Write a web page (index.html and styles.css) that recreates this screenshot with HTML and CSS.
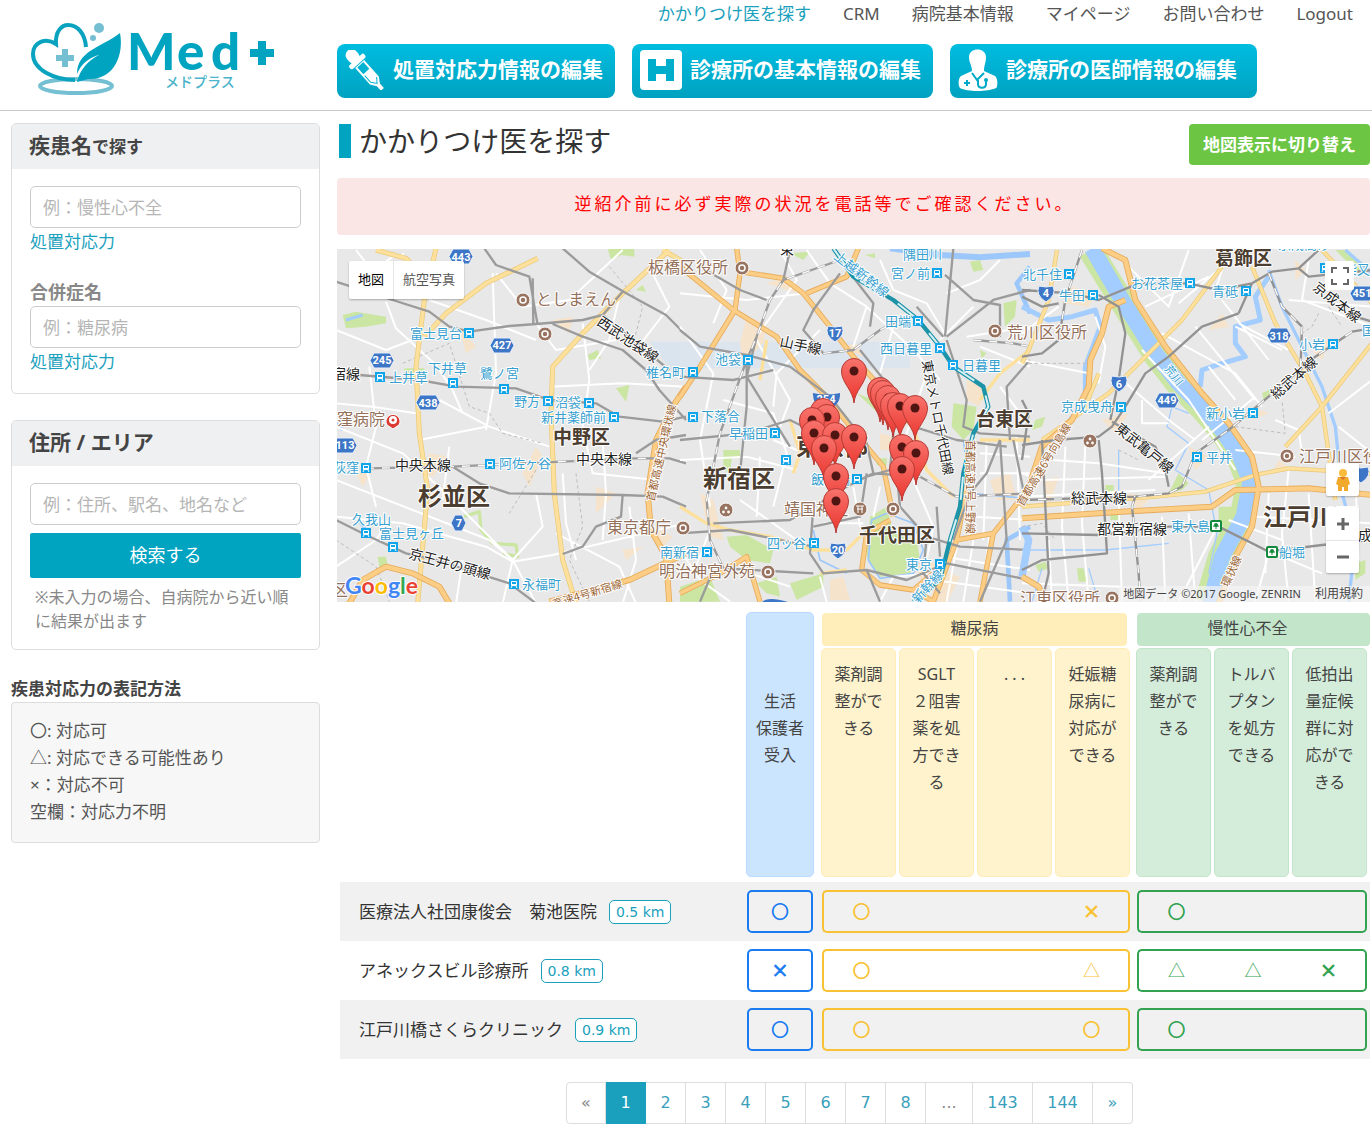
FILE: index.html
```html
<!DOCTYPE html>
<html lang="ja">
<head>
<meta charset="utf-8">
<meta name="viewport" content="width=device-width, initial-scale=1">
<title>Med+ かかりつけ医を探す</title>
<link rel="stylesheet" href="styles.css">
</head>
<body>
<header class="site-header">
  <a class="logo" href="#" aria-label="Med+ メドプラス">
    <svg width="250" height="76" viewBox="28 20 250 76" aria-hidden="true">
      <ellipse cx="76" cy="86" rx="36" ry="7" fill="none" stroke="#74bfd2" stroke-width="4"/>
      <path d="M75 80C55 80 33 70 33 54C33 42 46 37 56 44C55 31 62 25 68 25C78 25 85 34 86 47L60 76z" fill="#fff"/>
      <path d="M75 80C55 80 33 70 33 54C33 42 46 37 56 44C55 31 62 25 68 25C78 25 85 34 86 47" fill="none" stroke="#0aa3bf" stroke-width="4"/>
      <path d="M62 49h6v6h6v6h-6v6h-6v-6h-6v-6h6z" fill="#74bfd2"/>
      <circle cx="99" cy="28" r="5" fill="#74bfd2"/><circle cx="93" cy="38" r="3" fill="#74bfd2"/>
      <path d="M77 74C77 51 100 48 120 33C124 54 115 80 88 79L77 82C80 69 89 60 99 55C90 57 81 64 77 74z" fill="#00a4c1"/>
      <text x="127 177 211" y="70" class="logo-word">Med</text>
      <path d="M258 41h8v8h8v8h-8v8h-8v-8h-8v-8h8z" fill="#00a4c1"/>
      <text x="165" y="87" class="logo-kana">メドプラス</text>
    </svg>
  </a>
  <div class="header-main">
    <nav class="top-nav">
      <a class="current" href="#">かかりつけ医を探す</a>
      <a href="#">CRM</a>
      <a href="#">病院基本情報</a>
      <a href="#">マイページ</a>
      <a href="#">お問い合わせ</a>
      <a href="#">Logout</a>
    </nav>
    <nav class="edit-nav">
      <a href="#">
        <svg width="40" height="40" viewBox="0 0 40 40" aria-hidden="true"><g transform="rotate(-42 20 20)" fill="#fff"><rect x="14" y="-6" width="12" height="15" rx="6"/><rect x="10" y="6" width="20" height="5" rx="2"/><path d="M14 12h12v22l-4 6v6h-4v-6l-4-6z"/><path d="M16 13h8v9h-8z" fill="#00b3d3"/><path d="M16 24v9l4 5l4-5" fill="none" stroke="#00b3d3"/></g></svg>
        処置対応力情報の編集</a>
      <a href="#">
        <svg width="42" height="40" viewBox="0 0 42 40" aria-hidden="true"><rect width="42" height="40" rx="4" fill="#fff"/><path d="M8 9h8v7h10V9h8v22h-8v-7H16v7H8z" fill="#00aecb"/></svg>
        診療所の基本情報の編集</a>
      <a href="#">
        <svg width="40" height="42" viewBox="0 0 40 42" aria-hidden="true"><path d="M11 8C11-2 28-2 28 8C28 14 26 16 26 22L37 27C40 29 40 38 38 39C30 43 9 43 2 39C0 37 0 29 3 27L14 22C14 16 11 14 11 8z" fill="#fff"/><path d="M9 31v6M6 34h6M14 24l5 7l7-7M20 31v4c0 5 8 5 8 0v-3" fill="none" stroke="#00a9c7" stroke-width="2"/><circle cx="28" cy="31" r="2" fill="#00a9c7"/></svg>
        診療所の医師情報の編集</a>
    </nav>
  </div>
</header>

<div class="page">
  <aside class="sidebar">
    <form>
      <section class="card">
        <h2>疾患名<small>で探す</small></h2>
        <div class="card-body">
          <input type="text" aria-label="疾患名" placeholder="例：慢性心不全">
          <a class="ability" href="#">処置対応力</a>
          <label for="comp">合併症名</label>
          <input type="text" id="comp" placeholder="例：糖尿病">
          <a class="ability" href="#">処置対応力</a>
        </div>
      </section>
      <section class="card">
        <h2>住所 / エリア</h2>
        <div class="card-body">
          <input type="text" aria-label="住所 / エリア" placeholder="例：住所、駅名、地名など">
          <button class="search" type="submit">検索する</button>
          <p class="note">※未入力の場合、自病院から近い順に結果が出ます</p>
        </div>
      </section>
    </form>
    <h3>疾患対応力の表記方法</h3>
    <ul class="legend">
      <li>〇: 対応可</li>
      <li>△: 対応できる可能性あり</li>
      <li>×：対応不可</li>
      <li>空欄：対応力不明</li>
    </ul>
  </aside>

  <main>
    <div class="title-row">
      <h1>かかりつけ医を探す</h1>
      <button class="switch" type="button">地図表示に切り替え</button>
    </div>
    <p class="alert">逆紹介前に必ず実際の状況を電話等でご確認ください。</p>

    <div class="map">
      <svg class="map-art" viewBox="337 249 1033 353" preserveAspectRatio="xMidYMid slice" role="img" aria-label="地図">
        <defs>
          <symbol id="st" viewBox="0 0 10 10"><rect width="10" height="10" fill="#12a5ea"/><rect x="2" y="2" width="6" height="5" rx="1" fill="#fff"/><path d="M3 3h4v2H3z" fill="#12a5ea"/><path d="M2 9l1-2M8 9L7 7" stroke="#fff"/></symbol>
          <symbol id="gst" viewBox="0 0 12 12"><rect x="1" y="1" width="10" height="10" rx="1" fill="#fff" stroke="#12893b" stroke-width="2"/><circle cx="6" cy="5" r="2" fill="#12893b"/><path d="M3 6h6M6 5v4" stroke="#12893b"/></symbol>
          <symbol id="poi" viewBox="0 0 16 16"><circle cx="8" cy="8" r="7" fill="#98735f" stroke="#fff"/><circle cx="8" cy="8" r="3" fill="none" stroke="#fff" stroke-width="1.5"/></symbol>
          <symbol id="dots" viewBox="0 0 16 16"><circle cx="8" cy="8" r="7" fill="#98735f" stroke="#fff"/><g fill="#fff"><circle cx="8" cy="6" r="1.4"/><circle cx="5.5" cy="10" r="1.4"/><circle cx="10.500" cy="10" r="1.4"/></g></symbol>
          <symbol id="hex" viewBox="0 0 26 17"><path d="M5 1h16l4 7.500l-4 7.500H5L1 8.500z" fill="#3d76c6" stroke="#e8f0fb"/></symbol>
          <symbol id="shield" viewBox="0 0 20 18"><path d="M3 1Q10 3 17 1Q21 10 10 17Q-1 10 3 1z" fill="#3d76c6" stroke="#e8f0fb"/></symbol>
          <symbol id="pin" viewBox="0 0 28 48"><path d="M14 46C13 33 1.500 26 1.500 14a12.500 12.500 0 0 1 25 0C26.500 26 15 33 14 46z" fill="url(#pinfill)" stroke="#b63a33"/><circle cx="14" cy="14" r="4.500" fill="#4e1512"/></symbol>
          <linearGradient id="pinfill" x1="0" y1="0" x2="0" y2="1"><stop offset="0" stop-color="#f8736c"/><stop offset="1" stop-color="#ea352e"/></linearGradient>
        </defs>
        <rect x="337" y="249" width="1033" height="353" fill="#e8e8e8"/>

        <!-- western third -->
        <g transform="translate(336 240) scale(.33333)" fill="none" stroke-linejoin="round">
          <g fill="#cbe6a3"><path d="M20 225L60 215L150 230L150 250L90 260L30 265zM815 25h80v25l-40-5l-30 15zM755 345l30-15l10 25l-35 5zM840 445l40-10l-10 50zM205 385h60v30h-60zM125 950h25l5 25l-25 5zM900 150l20-15l10 20z"/></g>
          <path d="M30 240l50-15M0 550l20 20M60 830l30 40" stroke="#a3ccff" stroke-width="10"/>
          <path d="M385 830L430 815L435 870L470 910L540 915L545 950L500 940" stroke="#cbe6a3" stroke-width="10"/>
          <path d="M940 305h110v90h-40z" fill="#d9e4ee"/>
          <g fill="#f6e3cc"><path d="M280 640l60 10l-50 60l-20-10zM600 620l20 30l-40 90l-20-40zM60 700l50-10l-30 50zM780 740l60 20l-60 60zM860 930l60-10l-50 40zM370 260l50 60l-30 20zM650 240l60-10l-10 50zM960 860l50 30l-40 40z"/></g>
          <g stroke="#fff" stroke-width="6">
            <path d="M60 30L110 95L170 50M150 185L180 265L300 375L350 450L380 520M310 480L460 560L640 620M0 560L200 640L350 780L530 960L600 1090M530 960L620 860L600 760M530 960L460 900L0 720M450 570L480 400L470 100M600 250L660 330L840 300M640 440L860 430L1050 440M740 250L760 420L740 560L770 700L960 720M0 830L200 850L450 920L530 965L650 945L1050 850M100 380L120 560L90 680L120 800M250 600L450 560M0 490L110 500L240 520M0 270L150 330L230 300M280 180L450 240L600 300M480 100L560 200L700 180L860 30M680 700L690 850L720 960M800 600L810 760L800 900M880 800L900 960L860 1090M380 960L360 1090M200 40L240 160M530 960L500 1090M340 620L320 780M660 880L850 980L900 1090M850 170L820 300L760 390M950 100L1000 200L900 330M0 980L120 900L150 850"/>
          </g>
          <g stroke="#bdbdbd" stroke-width="3" stroke-dasharray="10 8"><path d="M200 370L340 310L400 500L460 520L500 580L620 610M720 700L740 860L700 960L760 1085M820 80L920 200L890 320M600 690L520 820M0 900L120 980L160 1085"/></g>
          <g stroke="#e9c878" stroke-width="15"><path id="wy" d="M300 25L265 180L240 380L250 580L275 750L245 1090M605 55L450 130L330 220L265 290M1000 30L860 160L740 280L650 380L645 520L655 760L680 960L720 1090M120 30L210 55L300 150M1050 70L980 30"/></g>
          <g stroke="#fde09b" stroke-width="11"><use href="#wy"/></g>
          <g stroke="#e6ab5b" stroke-width="18"><path id="wo" d="M40 1090L80 1020L150 980L230 1000L310 1040L340 1090M640 1085L880 1020L1050 940M1050 440L1010 500L960 600L935 760L945 870L990 950L1000 1090"/></g>
          <g stroke="#fbcd85" stroke-width="13"><use href="#wo"/></g>
          <g stroke="#9b9b9b" stroke-width="7"><path d="M0 125L170 180L280 215L340 260L400 275L520 258L600 252L740 240L800 225L860 155M445 25L480 75L580 110L604 250M590 115L592 250M680 25L760 95L880 165L990 225L1050 285M650 252L740 290L860 330L930 390L970 450L1050 540M70 405L250 420L360 440L540 445L640 480L780 490L850 530L980 545L1050 530M90 685L350 680L560 670L900 655L1000 655L1050 670M350 680L430 730L520 760L860 765L980 770L1050 800M860 765L855 830L780 860L740 920L680 942M0 840L90 885L210 940L300 960L520 1030L600 1090M900 640L960 600L1050 585M800 225L1000 390"/></g>
          <path d="M90 685L350 680L560 670L900 655L1000 655" stroke="#fff" stroke-width="4" stroke-dasharray="24 24"/>
        </g>

        <!-- centre third -->
        <g transform="translate(680 240) scale(.33333)" fill="none" stroke-linejoin="round">
          <path d="M0 305h690v80H0z" fill="#dce5ee"/>
          <g fill="#cbe6a3"><path d="M570 830L620 800L640 880L710 900L720 960L690 1000L600 1010L560 950zM140 890L200 885L280 930L270 970L200 960L150 920zM330 1030L430 1000L430 1040L350 1080zM0 1040L90 1010L120 1085L0 1085zM130 630h50v25h-25l-5 50l-20-20zM820 490L890 500L880 570L850 600L815 560zM530 460l50 20l15 40zM870 65l30-5l10 30l-30 5zM970 190l40-10l-5 50l-30 30zM590 655h30v20h-30zM230 1030l60-20l10 60l-40-10zM330 40l60-5l-20 25zM555 45l30-5v15zM900 330l20 10l-15 15z"/></g>
          <g fill="#f6e3cc"><path d="M200 230l60 20l-10 60l-60 60l-10-60zM60 760l40 20l30 120l-40-10zM860 420l50 20l-10 60l-40-20zM780 990l60 20l-40 80l-50-10zM260 130l60-20l30 50zM480 320l50-10l20 40zM600 580l40 10v40h-40zM690 960l90 10l-40 80zM450 1020l40-10l20 70h-60zM930 720l60-20l20 80h-60z"/></g>
          <g stroke="#9cc7fb"><path d="M630 25L780 45L900 52L1050 42" stroke-width="18"/><path d="M1050 80L1010 130L1050 220M990 1085L980 900L1050 860" stroke-width="14"/><path d="M565 960L600 1015L700 1000L730 930L700 850L620 820L575 840L565 960M850 600L870 760L1040 775M400 870L420 960L500 1000" stroke-width="5"/></g>
          <g stroke="#fff" stroke-width="6"><path d="M0 260L100 400L60 600L90 800M230 290L350 120L300 30M60 30L140 150L100 250M0 660L200 650L350 690M130 480L280 520L320 640L280 800M230 300L330 480L300 560M380 30L450 130L560 200L520 320M560 200L700 330L780 420M600 60L640 150L740 190L800 290M0 160L200 180L380 160M240 650L230 830M420 270L290 400L280 500M640 260L600 400M740 400L640 700M900 320L1050 380M960 440L1050 560M900 640L1050 650M900 700L1050 700M880 830L1050 840M920 600L910 900M1010 590L1020 900M700 720L760 860L740 960M520 740L540 860M600 740L580 830M180 780L350 900M150 980L330 1040M430 850L550 850M440 1085L420 1010M600 1085L640 1010L760 1000M830 920L800 1085M880 900L850 1085M930 880L900 1085M760 1020L1050 1060M790 950L1050 990M960 60L900 120L800 160M880 200L780 300M1050 260L860 290M0 930L60 1020L150 1085M280 600L420 660L480 640M90 870L40 1000"/></g>
          <g stroke="#e6ab5b" stroke-width="16"><path id="co" d="M170 25L180 100L165 210L60 380L0 470M0 80L160 210L290 290L360 390L430 460M180 95L310 115L370 160L450 260L520 350L600 440L700 560M535 25L500 110L380 160M430 460L560 620L610 680L640 830M0 1060L120 1000L200 950L240 1085M545 990L560 880L630 840M545 990L600 1035L700 1050L760 1000M870 600L850 800L830 900L760 1085M1050 740L980 830L940 880L900 1085M830 900L940 880M700 1050L760 1085"/></g>
          <g stroke="#fbcd85" stroke-width="11"><use href="#co"/></g>
          <g stroke="#fde09b" stroke-width="10"><path d="M700 560L740 690L820 770M1050 330L960 400L900 480M150 870L270 890L400 930L500 930L550 880M0 800L80 850L150 870M240 420L260 300M330 540L360 640L340 700M420 1000L500 990M900 600L1050 600"/></g>
          <g stroke="#9b9b9b" stroke-width="7"><path d="M480 60L310 120L270 180L230 290L200 360L120 580L80 780L90 900L130 985M200 360L200 500L180 700M330 30L310 120M0 270L60 320L200 345L330 380L450 470L560 610L580 700L500 740L400 800L330 840L100 850M820 25L795 290M800 290L940 180L1050 150M795 105L880 180L960 195L960 290M480 60L580 190L570 260M480 100L400 210L370 270L430 340L520 330L600 270L680 230M800 300L860 480L850 560L900 580L1050 590M0 600L200 580L330 540L450 600M580 700L720 710L830 770L1050 760M960 600L980 900L900 1085M400 800L390 940L430 1000L560 990L600 1085M130 985L400 1000M60 80L180 150L260 180M230 290L200 410L330 620M0 410L160 420L280 390M640 580L630 690L560 710M650 700L660 800L740 890L840 920L1050 930M400 920L150 870L0 880M740 890L730 1000L780 1060M540 330L620 430L640 580M1050 360L980 440L990 600M880 300L1000 310L1050 320M710 200L790 290M700 560L830 600L980 620M560 700L540 830L400 860M560 990L680 1020L800 970L1050 1020M1000 600L1040 800M100 990L60 1085M770 800L780 950M960 600L920 700L870 760L820 900"/></g>
          <path d="M480 60L310 120L270 180L230 290L200 360L120 580L80 780L90 900L130 985M430 340L520 330L600 270L680 230M880 300L1000 310L1050 320M650 700L720 710L830 770L1050 760" stroke="#fff" stroke-width="4" stroke-dasharray="24 24"/>
          <path d="M460 25L520 110L640 180L715 240L780 320L820 380L910 440L925 500L880 580L850 700L840 800L810 900L780 1020L700 1085" stroke="#1d93a8" stroke-width="13"/>
          <path d="M460 25L520 110L640 180L715 240L780 320L820 380L910 440L925 500L880 580L850 700L840 800L810 900L780 1020L700 1085" stroke="#d5f0f5" stroke-width="6" stroke-dasharray="70 60"/>
        </g>

        <!-- eastern third -->
        <g transform="translate(1022 240) scale(.33333)" fill="none" stroke-linejoin="round">
          <g fill="#cbe6a3"><path d="M590 800h40l10 40l-50 20zM250 735h25v30h-25zM165 985h20l10 40h-25zM470 700l30 30l-20 20l-40 10zM40 540l30-10l-10 30l-30 10zM940 30h30l60 60l-20 10zM720 460l30-15v15l-25 20zM265 815h30v25h-30zM1000 970l30-10v40l-30 20zM40 975l30-10l10 20l-30 10z"/></g>
          <g fill="#f6e3cc"><path d="M150 140l70 20l-20 40l-80-10zM600 220l20 40l-60 10zM240 540l80-20l-40 60zM860 320l60-20l-20 60zM690 500l50 20l-50 20zM500 620l60 30l-40 40zM310 760l80 10l-40 40zM60 720l50-10l-30 90zM820 60l30 30l-30 30zM770 660l40 30l-60 10z"/></g>
          <path d="M205 30L300 185L400 345L470 435L540 505L600 575L650 650L680 730L660 830L595 950L555 1085" stroke="#cbe6a3" stroke-width="74"/>
          <path d="M210 25L300 180L400 340L470 430L540 500L600 570L655 650L685 725L665 830L600 950L565 1090" stroke="#a3ccff" stroke-width="48"/>
          <g stroke="#a3ccff"><path d="M0 200L80 240L150 230L220 210L235 260L190 380L190 480L130 560M740 110L700 170L715 240L640 260L640 310L670 350L600 370L540 390L535 440" stroke-width="15"/><path d="M740 90L780 200L840 320L900 440L940 560L960 760L1000 900L980 1085M970 30L1050 100" stroke-width="10"/><path d="M500 520L450 500L435 560L500 610L460 690L560 750L585 880L560 1000M0 930L250 930L440 910M200 985L230 1085M290 630V800M60 985L30 1085M230 40L460 425" stroke-width="4"/><path d="M0 860L20 900L0 1010" stroke-width="22"/></g>
          <g stroke="#fff" stroke-width="6"><path d="M110 200L0 280M220 230L250 320L230 430M0 360L200 400M90 660L230 670L430 700M60 720L430 710M130 620L120 860L140 1085M190 610L180 850L200 1085M290 780L300 1085M420 830L430 1085M500 820L520 1085M0 1030L300 1040M80 900L90 1085M360 330L500 480L640 690M420 280L640 400L720 500M470 190L600 80M520 260L700 480M650 250L800 330M300 420L440 540L520 600M560 560L380 720M700 470L540 600M560 380L640 480M740 760L730 1000M800 690L780 880L800 1085M860 760L880 1085M660 900L900 1000M700 830L1050 850M950 560L1050 640M920 520L1050 420M800 180L1050 200M860 60L840 180L1050 260M780 330L640 260M600 180L740 360M620 30L580 150M320 80L440 200L500 30M370 200L560 110M640 630L820 650M760 540L830 570L840 640M440 550H360V480M0 770L400 750M0 700L60 720M1000 700L1010 960M580 870L470 1085M620 840L780 900M740 940L700 1085"/></g>
          <g stroke="#bdbdbd" stroke-width="3" stroke-dasharray="10 8"><path d="M20 370L190 370L210 400M640 560L790 580L780 480M890 220L870 260L840 280M290 630L350 660M0 860L60 850L100 900M920 200L960 260"/></g>
          <g stroke="#e9c878" stroke-width="13"><path id="ey" d="M105 30L80 180L20 330L0 370M600 80L480 240L400 320L260 460L60 600M690 80L760 250L850 400L900 500L940 780M1050 310L900 500L790 620M0 800L400 770L550 755L700 705L800 685L1050 700M230 400L190 500L60 620M900 30L1050 190"/></g>
          <g stroke="#fde09b" stroke-width="9"><use href="#ey"/></g>
          <g stroke="#e6ab5b" stroke-width="18"><path id="eo" d="M240 25L310 60L340 180L430 320L540 460L620 550L690 650L710 740L690 860L640 950L590 1090M310 180L260 200L240 280L205 360L200 440L150 540L60 620L0 800M0 835L300 815L570 800L640 750L860 745L1050 765M0 1010L50 1040L70 1085"/></g>
          <g stroke="#fbcd85" stroke-width="13"><use href="#eo"/></g>
          <g stroke="#929292" stroke-width="7"><path d="M0 150L150 160L230 180L350 130L500 130L590 150L690 130L750 95L830 85L890 30M180 30L150 120L130 180L110 300L60 340L0 350M230 165L290 200L310 280L290 420L265 540M650 220L540 260L440 350L370 400L310 500L270 560L230 590L100 600L0 615M650 220L690 130M830 85L860 110L1050 90M740 100L780 200L840 260L835 400M1050 265L990 275L880 350L740 470L620 570L520 640L480 740L440 760L340 770L330 800L350 1000L355 1085M270 545L400 620L430 690L440 740M230 600L240 700L255 940L60 960L0 990M0 880L230 885L440 860L590 860L740 935L900 915L1050 900M60 600L80 1000L60 1085M0 170L60 200L110 190M0 780L340 770M1000 230L1050 245M0 480L20 520L0 660"/></g>
          <path d="M180 30L150 120L130 180L110 300M740 100L780 200L840 260L835 400M990 275L880 350L740 470L620 570L520 640L480 740L440 760L340 770L330 800L350 1000L355 1085M0 780L340 770" stroke="#fff" stroke-width="4" stroke-dasharray="24 24"/>
        </g>

        <g class="m-blue">
          <text x="410" y="338">富士見台</text><text x="428" y="373">下井草</text><text x="480" y="378">鷺ノ宮</text><text x="389" y="382">上井草</text><text x="514" y="406">野方</text><text x="555" y="407">沼袋</text><text x="541" y="422">新井薬師前</text><text x="499" y="468">阿佐ヶ谷</text><text x="333" y="472">荻窪</text><text x="352" y="524">久我山</text><text x="379" y="538">富士見ヶ丘</text><text x="522" y="589">永福町</text><text x="646" y="377">椎名町</text><text x="660" y="557">南新宿</text>
          <text x="891" y="278">宮ノ前</text><text x="885" y="326">田端</text><text x="880" y="353">西日暮里</text><text x="962" y="370">日暮里</text><text x="715" y="364">池袋</text><text x="701" y="421">下落合</text><text x="729" y="438">早稲田</text><text x="811" y="484">飯田橋</text><text x="767" y="548">四ッ谷</text><text x="906" y="569">東京</text>
          <text x="1023" y="279">北千住</text><text x="1059" y="300">牛田</text><text x="1131" y="288">お花茶屋</text><text x="1212" y="296">青砥</text><text x="1299" y="349">小岩</text><text x="1362" y="335">国府台</text><text x="1061" y="411">京成曳舟</text><text x="1206" y="418">新小岩</text><text x="1206" y="462">平井</text><text x="1171" y="531">東大島</text><text x="1279" y="557">船堀</text><text x="1278" y="249">京成高砂</text><text x="1344" y="274">柴又</text>
          <text transform="translate(833 258) rotate(38)">上越新幹線</text><text x="903" y="259">隅田川</text><text transform="translate(1164 369) rotate(52)" font-size="11">荒川</text><text transform="translate(918 604) rotate(-48)">新幹線</text>
        </g>
        <g class="m-brown">
          <text x="536" y="305">としまえん</text><text x="337" y="425">窪病院</text><text x="607" y="533">東京都庁</text><text x="659" y="577">明治神宮外苑</text><text x="648" y="273">板橋区役所</text><text x="1007" y="338">荒川区役所</text><text x="784" y="515">靖国神社</text><text x="1299" y="462">江戸川区役所</text><text x="1020" y="604">江東区役所</text><text x="332" y="596">区</text>
        </g>
        <g class="m-road">
          <text transform="translate(654 502) rotate(-77)">首都高速中央環状線</text><text transform="translate(554 608) rotate(-17)">高速4号新宿線</text><text transform="translate(966 440) rotate(90)">首都高速1号上野線</text><text transform="translate(1023 507) rotate(-59)">首都高速6号向島線</text><text transform="translate(1228 588) rotate(-65)">環状線</text>
        </g>
        <g class="m-black">
          <text x="332" y="379">宿線</text><text x="395" y="470">中央本線</text><text x="576" y="464">中央本線</text><text transform="translate(408 558) rotate(15)">京王井の頭線</text><text transform="translate(596 324) rotate(34)">西武池袋線</text><text transform="translate(779 346) rotate(12)">山手線</text><text transform="translate(922 361) rotate(79)" font-size="13">東京メトロ千代田線</text><text transform="translate(1312 289) rotate(38)">京成本線</text><text transform="translate(1276 400) rotate(-41)">総武本線</text><text transform="translate(1114 430) rotate(39)">東武亀戸線</text><text x="1071" y="503">総武本線</text><text x="1097" y="534">都営新宿線</text><text x="780" y="254">東</text><text x="1358" y="540">成</text>
        </g>
        <g class="m-ward">
          <text x="553" y="444">中野区</text><text x="976" y="426">台東区</text><text x="859" y="542">千代田区</text><text x="1215" y="265">葛飾区</text>
        </g>
        <g class="m-ward big">
          <text x="418" y="505">杉並区</text><text x="703" y="487">新宿区</text><text x="796" y="455">東京都</text><text x="1263" y="526">江戸川区</text>
        </g>
        <g>
          <use href="#st" x="464" y="328" width="10" height="10"/><use href="#st" x="375" y="372" width="10" height="10"/><use href="#st" x="448" y="378" width="10" height="10"/><use href="#st" x="499" y="384" width="10" height="10"/><use href="#st" x="543" y="396" width="10" height="10"/><use href="#st" x="584" y="398" width="10" height="10"/><use href="#st" x="609" y="412" width="10" height="10"/><use href="#st" x="485" y="459" width="10" height="10"/><use href="#st" x="361" y="463" width="10" height="10"/><use href="#st" x="361" y="528" width="10" height="10"/><use href="#st" x="388" y="542" width="10" height="10"/><use href="#st" x="509" y="579" width="10" height="10"/><use href="#st" x="688" y="367" width="10" height="10"/><use href="#st" x="702" y="547" width="10" height="10"/>
          <use href="#st" x="932" y="268" width="10" height="10"/><use href="#st" x="913" y="316" width="10" height="10"/><use href="#st" x="935" y="343" width="10" height="10"/><use href="#st" x="948" y="360" width="10" height="10"/><use href="#st" x="743" y="355" width="10" height="10"/><use href="#st" x="688" y="412" width="10" height="10"/><use href="#st" x="770" y="428" width="10" height="10"/><use href="#st" x="781" y="455" width="10" height="10"/><use href="#st" x="852" y="474" width="10" height="10"/><use href="#st" x="809" y="538" width="10" height="10"/><use href="#st" x="935" y="559" width="10" height="10"/>
          <use href="#st" x="1064" y="269" width="10" height="10"/><use href="#st" x="1088" y="290" width="10" height="10"/><use href="#st" x="1185" y="278" width="10" height="10"/><use href="#st" x="1241" y="286" width="10" height="10"/><use href="#st" x="1328" y="339" width="10" height="10"/><use href="#st" x="1116" y="402" width="10" height="10"/><use href="#st" x="1248" y="408" width="10" height="10"/><use href="#st" x="1192" y="452" width="10" height="10"/><use href="#st" x="1320" y="263" width="10" height="10"/>
          <use href="#gst" x="1210" y="520" width="12" height="12"/><use href="#gst" x="1266" y="546" width="12" height="12"/>
          <use href="#poi" x="515" y="292" width="16" height="16"/><use href="#poi" x="537" y="326" width="16" height="16"/><use href="#poi" x="734" y="260" width="16" height="16"/><use href="#poi" x="675" y="520" width="16" height="16"/><use href="#poi" x="760" y="564" width="16" height="16"/><use href="#poi" x="987" y="323" width="16" height="16"/><use href="#poi" x="885" y="501" width="16" height="16"/><use href="#poi" x="1279" y="448" width="16" height="16"/><use href="#poi" x="1104" y="590" width="16" height="16"/>
          <use href="#dots" x="718" y="502" width="16" height="16"/><use href="#dots" x="1082" y="433" width="16" height="16"/>
          <circle cx="860" cy="509" r="7" fill="#98735f" stroke="#fff"/><path d="M856 506h8M857 509h6M858 506v7M862 506v7" stroke="#fff"/>
          <path d="M393 429l-6-4a7 7 0 1 1 12 0z" fill="#dc3b34" stroke="#fff"/><circle cx="393" cy="420" r="4" fill="#fff"/><circle cx="393" cy="420" r="1.500" fill="#dc3b34"/>
        </g>
        <g>
          <use href="#hex" x="489" y="337" width="26" height="17"/><use href="#hex" x="369" y="352" width="26" height="17"/><use href="#hex" x="415" y="394" width="26" height="17"/><use href="#hex" x="448" y="248" width="26" height="17"/><use href="#hex" x="332" y="437" width="26" height="17"/><path d="M455 515h7l4 8l-4 8h-7l-4-8z" fill="#3d76c6" stroke="#e8f0fb"/><use href="#hex" x="1349" y="285" width="26" height="17"/><use href="#hex" x="1266" y="327" width="26" height="17"/><use href="#hex" x="1154" y="392" width="26" height="17"/>
          <use href="#shield" x="825" y="325" width="20" height="18"/><use href="#shield" x="828" y="542" width="20" height="18"/><use href="#shield" x="1036" y="285" width="20" height="18"/><use href="#shield" x="1109" y="375" width="20" height="18"/><use href="#shield" x="1351" y="466" width="20" height="18"/>
          <path d="M813 393q13 3 27 0q1 12-14 18q-14-6-13-18zM762 602q6-6 26 0z" fill="#3d76c6"/>
        </g>
        <g class="m-num">
          <text x="502" y="349">427</text><text x="382" y="364">245</text><text x="428" y="407">438</text><text x="461" y="261">443</text><text x="345" y="449">113</text><text x="459" y="527">7</text><text x="1362" y="297">451</text><text x="1279" y="340">318</text><text x="1167" y="404">449</text><text x="835" y="337">17</text><text x="838" y="554">20</text><text x="1046" y="297">4</text><text x="1119" y="388">6</text><text x="826" y="403">254</text>
        </g>
        <g>
          <use href="#pin" x="840" y="357" width="28" height="48"/><use href="#pin" x="866" y="376" width="28" height="48"/><use href="#pin" x="869" y="379" width="28" height="48"/><use href="#pin" x="874" y="384" width="28" height="48"/><use href="#pin" x="879" y="391" width="28" height="48"/><use href="#pin" x="886" y="392" width="28" height="48"/><use href="#pin" x="901" y="394" width="28" height="48"/><use href="#pin" x="809" y="397" width="28" height="48"/><use href="#pin" x="813" y="403" width="28" height="48"/><use href="#pin" x="798" y="406" width="28" height="48"/><use href="#pin" x="800" y="419" width="28" height="48"/><use href="#pin" x="821" y="421" width="28" height="48"/><use href="#pin" x="840" y="423" width="28" height="48"/><use href="#pin" x="810" y="434" width="28" height="48"/><use href="#pin" x="822" y="462" width="28" height="48"/><use href="#pin" x="822" y="487" width="28" height="48"/><use href="#pin" x="888" y="433" width="28" height="48"/><use href="#pin" x="902" y="439" width="28" height="48"/><use href="#pin" x="888" y="455" width="28" height="48"/>
        </g>
        <text x="345" y="594" class="m-google"><tspan fill="#4285f4">G</tspan><tspan fill="#ea4335">o</tspan><tspan fill="#fbbc05">o</tspan><tspan fill="#4285f4">g</tspan><tspan fill="#34a853">l</tspan><tspan fill="#ea4335">e</tspan></text>
      </svg>
      <div class="map-type"><button type="button" class="on">地図</button><button type="button">航空写真</button></div>
      <button type="button" class="map-full" aria-label="全画面表示"><svg width="18" height="18" viewBox="0 0 18 18" aria-hidden="true"><path d="M1 6V1h5M12 1h5v5M17 12v5h-5M6 17H1v-5" fill="none" stroke="#666" stroke-width="2"/></svg></button>
      <div class="map-side">
        <button type="button" class="pegman" aria-label="ストリートビュー"><svg width="16" height="24" viewBox="0 0 16 24" aria-hidden="true"><path d="M3 9h10l2 7l-2 1v6H9v-4H7v4H3v-6l-2-1z" fill="#f0a92b"/><circle cx="8" cy="5" r="4" fill="#fbbc3c"/><path d="M5 9l3 3l3-3z" fill="#d9752c"/></svg></button>
        <div class="map-zoom">
          <button type="button" aria-label="拡大"><svg width="12" height="12" viewBox="0 0 12 12" aria-hidden="true"><path d="M6 0v12M0 6h12" stroke="#666" stroke-width="3"/></svg></button>
          <button type="button" aria-label="縮小"><svg width="12" height="12" viewBox="0 0 12 12" aria-hidden="true"><path d="M0 6h12" stroke="#666" stroke-width="3"/></svg></button>
        </div>
      </div>
      <div class="map-credit"><span>地図データ ©2017 Google, ZENRIN</span><a href="#">利用規約</a></div>
    </div>

    <table class="results">
      <colgroup><col><col class="c-blue"><col class="c-item"><col class="c-item"><col class="c-item"><col class="c-end"><col class="c-item"><col class="c-item"><col class="c-item"></colgroup>
      <thead>
        <tr>
          <td rowspan="2"></td>
          <th rowspan="2" scope="col"><div class="head blue">生活<br>保護者<br>受入</div></th>
          <th colspan="4" scope="colgroup"><div class="group yellow">糖尿病</div></th>
          <th colspan="3" scope="colgroup"><div class="group green">慢性心不全</div></th>
        </tr>
        <tr>
          <th scope="col"><div class="head yellow">薬剤調整ができる</div></th>
          <th scope="col"><div class="head yellow">SGLT２阻害薬を処方できる</div></th>
          <th scope="col"><div class="head yellow">. . .</div></th>
          <th scope="col"><div class="head yellow">妊娠糖尿病に対応ができる</div></th>
          <th scope="col"><div class="head green">薬剤調整ができる</div></th>
          <th scope="col"><div class="head green">トルバプタンを処方できる</div></th>
          <th scope="col"><div class="head green">低拍出量症候群に対応ができる</div></th>
        </tr>
      </thead>
      <tbody>
        <tr>
          <th scope="row">医療法人社団康俊会　菊池医院<span class="km">0.5 km</span></th>
          <td><div class="mark blue first last">○</div></td>
          <td><div class="mark yellow first">○</div></td><td><div class="mark yellow"></div></td><td><div class="mark yellow"></div></td><td><div class="mark yellow last">×</div></td>
          <td><div class="mark green first">○</div></td><td><div class="mark green"></div></td><td><div class="mark green last"></div></td>
        </tr>
        <tr>
          <th scope="row">アネックスビル診療所<span class="km">0.8 km</span></th>
          <td><div class="mark blue first last">×</div></td>
          <td><div class="mark yellow first">○</div></td><td><div class="mark yellow"></div></td><td><div class="mark yellow"></div></td><td><div class="mark yellow last maybe">△</div></td>
          <td><div class="mark green first maybe">△</div></td><td><div class="mark green maybe">△</div></td><td><div class="mark green last">×</div></td>
        </tr>
        <tr>
          <th scope="row">江戸川橋さくらクリニック<span class="km">0.9 km</span></th>
          <td><div class="mark blue first last">○</div></td>
          <td><div class="mark yellow first">○</div></td><td><div class="mark yellow"></div></td><td><div class="mark yellow"></div></td><td><div class="mark yellow last">○</div></td>
          <td><div class="mark green first">○</div></td><td><div class="mark green"></div></td><td><div class="mark green last"></div></td>
        </tr>
      </tbody>
    </table>

    <nav class="pager" aria-label="ページ">
      <span>«</span><a class="active" href="#">1</a><a href="#">2</a><a href="#">3</a><a href="#">4</a><a href="#">5</a><a href="#">6</a><a href="#">7</a><a href="#">8</a><span class="dots">...</span><a class="wide" href="#">143</a><a class="wide" href="#">144</a><a href="#">»</a>
    </nav>
  </main>
</div>
</body>
</html>
```
FILE: styles.css
```css
* { box-sizing: border-box; }
body {
  margin: 0;
  background: #fff;
  color: #444;
  font: 16px/27px "Noto Sans", "Noto Sans CJK JP", sans-serif;
}
a { color: #1a9fbd; text-decoration: none; }
h1, h2, h3, p, ul { margin: 0; padding: 0; }
button, input { font: inherit; }
button { border: 0; padding: 0; cursor: pointer; }

/* header */
.site-header {
  display: flex;
  justify-content: space-between;
  height: 111px;
  padding-left: 28px;
  border-bottom: 1px solid #c8c8c8;
}
.logo { padding-top: 20px; }
.logo svg { display: block; }
.logo-word { font: 900 51px Lato, sans-serif; fill: #00a4c1; }
.logo-kana { font: 500 14px "Noto Sans CJK JP", sans-serif; fill: #4bb3ca; }
.header-main {
  flex: 1;
  margin-left: 59px;
}
.top-nav {
  display: flex;
  justify-content: flex-end;
  gap: 32px;
  height: 44px;
  padding-right: 19px;
  font-size: 17px;
  white-space: nowrap;
}
.top-nav a { color: #555; }
.top-nav .current { color: #1a9fbd; }
.edit-nav { display: flex; gap: 17px; white-space: nowrap; }
.edit-nav a {
  display: flex;
  align-items: center;
  gap: 8px;
  height: 54px;
  padding: 0 12px 3px 8px;
  border-radius: 8px;
  background: linear-gradient(#00bde0, #00a2c0);
  color: #fff;
  font-size: 21px;
  font-weight: 700;
}
.edit-nav a:last-child { padding-right: 20px; }

/* two-column page */
.page {
  display: grid;
  grid-template-columns: 309px 1fr;
  gap: 17px;
  padding: 13px 2px 12px 11px;
}
.sidebar { margin-top: -1px; }
.card {
  border: 1px solid #ddd;
  border-radius: 5px;
  margin-bottom: 26px;
  overflow: hidden;
}
.card h2 {
  height: 45px;
  padding: 0 17px;
  background: #eef0f2;
  font-size: 21px;
  line-height: 43px;
  color: #444;
}
.card h2 small { font-size: 17px; }
.card-body { padding: 17px 18px 18px; }
.card input {
  display: block;
  width: 100%;
  height: 42px;
  padding: 0 12px;
  border: 1px solid #ccc;
  border-radius: 5px;
  background: #fff;
  font-size: 17px;
}
.card input::placeholder { color: #b5b5b5; opacity: 1; }
.ability { display: block; font-size: 17px; }
.card label {
  display: block;
  margin-top: 24px;
  color: #888;
  font-size: 18px;
  font-weight: 700;
}
.search {
  width: 100%;
  height: 45px;
  margin-top: 8px;
  border-radius: 2px;
  background: #00a4c1;
  color: #fff;
  font-size: 18px;
}
.note { padding: 7px 5px 0; line-height: 24px; color: #888; }
.card:last-child .card-body { padding-bottom: 16px; }
.sidebar h3 { font-size: 17px; line-height: 26px; color: #444; }
.legend {
  padding: 14px 18px 17px;
  border: 1px solid #ddd;
  border-radius: 4px;
  background: #f7f7f7;
  list-style: none;
  color: #555;
  font-size: 17px;
}

/* main column */
main { min-width: 0; }
.title-row { display: flex; justify-content: space-between; align-items: flex-start; }
h1 {
  margin-left: 2px;
  padding-left: 8px;
  border-left: 12px solid #00a4c1;
  font-size: 28px;
  font-weight: 400;
  line-height: 34px;
  color: #333;
}
.switch {
  height: 41px;
  padding: 0 14px;
  border-radius: 4px;
  background: #6cc644;
  color: #fff;
  font-size: 17px;
  font-weight: 700;
}
.alert {
  margin: 13px 0 14px;
  padding: 12px 58px 18px 0;
  border-radius: 4px;
  background: #fbe6e6;
  color: #f00;
  font-size: 17px;
  letter-spacing: 3px;
  text-align: center;
}

/* map */
.map { position: relative; height: 353px; overflow: hidden; font-size: 12px; line-height: 15px; }
.map-art { display: block; width: 100%; height: 100%; font-family: "Noto Sans CJK JP", sans-serif; }
.map-art text { paint-order: stroke; stroke: #fff; stroke-width: 2px; stroke-linejoin: round; }
.m-blue { font-size: 13px; fill: #379fd0; }
.m-brown { font-size: 16px; fill: #94705a; }
.m-road { font-size: 11px; fill: #9a6433; }
.m-black { font-size: 14px; fill: #222; }
.m-ward { font-size: 19px; font-weight: 700; fill: #4b3d2f; }
.m-ward.big { font-size: 24px; }
.map-art .m-num text { font: 700 11px Roboto, sans-serif; fill: #fff; stroke: none; text-anchor: middle; }
.m-google { font: 700 23px Lato, sans-serif; }
.map button { background: #fff; color: #555; }
.map-type {
  position: absolute;
  top: 12px;
  left: 12px;
  display: flex;
  border-radius: 2px;
  overflow: hidden;
  box-shadow: 0 1px 2px #0004;
}
.map-type button { height: 38px; padding: 0 9px 2px; font-size: 13px; }
.map .map-type .on { color: #000; border-right: 1px solid #e6e6e6; }
.map-full { position: absolute; top: 12px; right: 16px; width: 29px; height: 29px; border-radius: 2px; }
.map-full svg, .pegman svg, .map-zoom svg { display: block; margin: auto; }
.map-side { position: absolute; right: 11px; bottom: 29px; width: 33px; display: grid; gap: 11px; }
.pegman { height: 33px; border-radius: 2px; box-shadow: 0 1px 2px #0004; }
.map-zoom { display: grid; border-radius: 2px; overflow: hidden; box-shadow: 0 1px 2px #0004; }
.map-zoom button { height: 33px; }
.map-zoom button + button { border-top: 1px solid #e6e6e6; }
.map-credit {
  position: absolute;
  right: 0;
  bottom: 0;
  display: flex;
  gap: 14px;
  padding: 0 7px 1px 4px;
  background: #f5f5f5b3;
  color: #444;
}
.map-credit span { font-size: 11px; }
.map-credit a { color: #444; }

/* result table */
.results {
  width: calc(100% - 3px);
  margin: 10px 0 0 3px;
  border-collapse: collapse;
  table-layout: fixed;
}
.results th, .results td { padding: 0; font-weight: 400; }
.c-blue { width: 75px; }
.c-item { width: 78px; }
.c-end { width: 81px; }
thead tr:first-child { height: 36px; }
thead th { vertical-align: top; }
.head {
  width: 75px;
  height: 229px;
  margin-bottom: 5px;
  padding: 12px;
  border: 1px solid;
  border-radius: 5px;
  text-align: center;
}
.head.blue { width: 68px; height: 265px; padding: 75px 0 0; background: #cce5ff; border-color: #b8daff; }
.head.yellow { background: #fff3cd; border-color: #ffeeba; }
.head.green { background: #d4edda; border-color: #c3e6cb; }
.group { height: 33px; margin: 1px 9px 2px 1px; border-radius: 4px; line-height: 31px; }
.group.yellow { background: #ffeeba; }
.group.green { margin-right: 0; padding-right: 12px; background: #c3e6cb; }
tbody tr { height: 59px; }
tbody tr:nth-child(odd) { background: #f1f1f1; }
.results tbody th { padding-left: 19px; text-align: left; font-size: 17px; color: #333; white-space: nowrap; }
.km {
  display: inline-block;
  margin-left: 12px;
  padding: 0 6px;
  border: 1px solid #1a9fbd;
  border-radius: 5px;
  background: #fff;
  color: #1a9fbd;
  font: 14px/22px "DejaVu Sans", sans-serif;
  vertical-align: 1px;
}
.mark {
  height: 43px;
  border: solid;
  border-width: 2px 0;
  font: 17px/38px "Noto Sans CJK JP", sans-serif;
  text-align: center;
  -webkit-text-stroke: 1px;
}
.mark.first { margin-left: 1px; border-left-width: 2px; border-radius: 5px 0 0 5px; }
.mark.last { margin-right: 3px; border-right-width: 2px; border-radius: 0 5px 5px 0; }
.mark.yellow.last { margin-right: 6px; }
.mark.first.last { margin-right: 8px; border-radius: 5px; }
.mark.maybe { -webkit-text-stroke: 0; }
.mark.blue { color: #1a7cf0; }
.mark.yellow { color: #f9c234; }
.mark.green { color: #33a351; }

/* pagination */
.pager {
  display: flex;
  justify-content: center;
  margin-top: 23px;
  padding-right: 8px;
  font: 16px/40px "DejaVu Sans", sans-serif;
}
.pager a, .pager span {
  width: 40px;
  border: solid #ddd;
  border-width: 1px 1px 1px 0;
  text-align: center;
  color: #3a9fbb;
}
.pager span { color: #888; }
.pager :first-child { border-left-width: 1px; border-radius: 4px 0 0 4px; }
.pager :last-child { border-radius: 0 4px 4px 0; }
.pager .active { background: #1a9fbd; border-color: #1a9fbd; color: #fff; }
.pager .dots { width: 47px; }
.pager .wide { width: 60px; }
```
